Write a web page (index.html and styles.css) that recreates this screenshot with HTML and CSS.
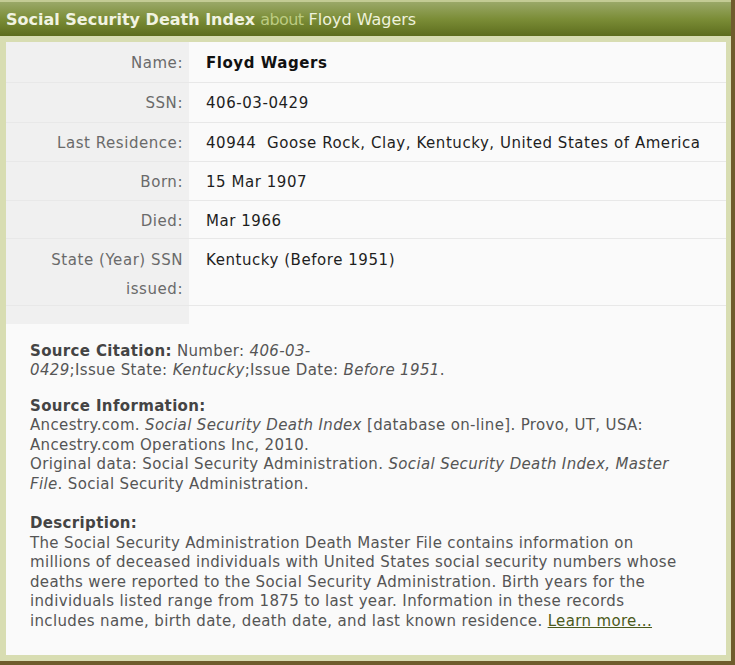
FILE: index.html
```html
<!DOCTYPE html>
<html lang="en">
<head>
    <meta charset="UTF-8">
    <title>Social Security Death Index - Floyd Wagers</title>
    <link rel="stylesheet" href="styles.css">
</head>
<body>

<div class="frame">
    <div class="header">
        <span class="title">Social Security Death Index</span>
        <span class="about">about</span>
        <span class="person">Floyd Wagers</span>
    </div>

    <div class="panel">
        <table class="record">
            <tr class="row">
                <td class="label">Name:</td>
                <td class="value name">Floyd Wagers</td>
            </tr>
            <tr class="row">
                <td class="label">SSN:</td>
                <td class="value">406-03-0429</td>
            </tr>
            <tr class="row mid">
                <td class="label">Last Residence:</td>
                <td class="value">40944&nbsp; Goose Rock, Clay, Kentucky, United States of America</td>
            </tr>
            <tr class="row mid">
                <td class="label">Born:</td>
                <td class="value">15 Mar 1907</td>
            </tr>
            <tr class="row short">
                <td class="label">Died:</td>
                <td class="value">Mar 1966</td>
            </tr>
            <tr class="row tall">
                <td class="label">State (Year) SSN issued:</td>
                <td class="value">Kentucky (Before 1951)</td>
            </tr>
            <tr class="spacer">
                <td class="label"></td>
                <td></td>
            </tr>
        </table>

        <div class="source">
            <p>
                <b>Source Citation:</b> Number: <i>406-03-</i><br>
                <i>0429</i>;Issue State: <i>Kentucky</i>;Issue Date: <i>Before 1951</i>.
            </p>
            <p>
                <b>Source Information:</b><br>
                Ancestry.com. <i>Social Security Death Index</i> [database on-line]. Provo, UT, USA: Ancestry.com Operations Inc, 2010.<br>
                Original data: Social Security Administration. <i>Social Security Death Index, Master File</i>. Social Security Administration.
            </p>
            <p class="description">
                <b>Description:</b><br>
                The Social Security Administration Death Master File contains information on millions of deceased individuals with United States social security numbers whose deaths were reported to the Social Security Administration. Birth years for the individuals listed range from 1875 to last year. Information in these records includes name, birth date, death date, and last known residence. <a href="#" class="more">Learn more...</a>
            </p>
        </div>
    </div>
</div>

</body>
</html>
```

FILE: styles.css
```css
body {
    margin: 0;
    padding: 0;
    font-family: "DejaVu Sans", Verdana, sans-serif;
    background-color: #fff;
}

.frame {
    width: 735px;
    height: 665px;
    box-sizing: border-box;
    background-color: #d8ddb2;
    border-right: 4px solid #6e5c2c;
    border-bottom: 4px solid #6e5c2c;
    overflow: hidden;
}

.header {
    height: 36px;
    box-sizing: border-box;
    padding: 8px 0 0 6px;
    border-top: 2px solid #c3cb94;
    background: linear-gradient(#9aa868, #7b8d37 50%, #5d6d1d);
    font-size: 16px;
    white-space: nowrap;
}

.title {
    font-weight: bold;
    color: #f1f3e2;
}

.about {
    color: #bccb82;
    letter-spacing: -0.6px;
}

.person {
    color: #eef1dc;
}

.panel {
    margin: 6px 5px 0 6px;
    height: 613px;
    background-color: #fafafa;
}

.record {
    width: 100%;
    border-collapse: collapse;
    font-size: 15px;
    letter-spacing: 0.55px;
}

.row td {
    height: 40px;
    border-bottom: 1px solid #e8e8e8;
    vertical-align: top;
    padding-top: 11px;
    box-sizing: border-box;
}

.row:first-child td {
    padding-top: 12px;
}

.row.mid td {
    height: 39px;
}

.row.short td {
    height: 38px;
}

.row.tall td {
    height: 67px;
    padding-top: 7px;
    line-height: 29px;
}

.label {
    width: 183px;
    box-sizing: border-box;
    padding-right: 6px;
    text-align: right;
    color: #6a6a6a;
    background-color: #f0f0f0;
}

.value {
    padding-left: 17px;
    color: #1e1e1e;
}

.name {
    font-weight: bold;
    color: #111;
}

.spacer td {
    height: 18px;
    padding: 0;
}

.source {
    padding: 18px 36px 0 24px;
    font-size: 15px;
    letter-spacing: 0.35px;
    line-height: 19.5px;
    color: #555;
}

.source p {
    margin: 0 0 16px 0;
}

.source .description {
    margin-top: 20px;
}

.source b {
    color: #444;
}

.more {
    color: #4c5a1c;
}
```
